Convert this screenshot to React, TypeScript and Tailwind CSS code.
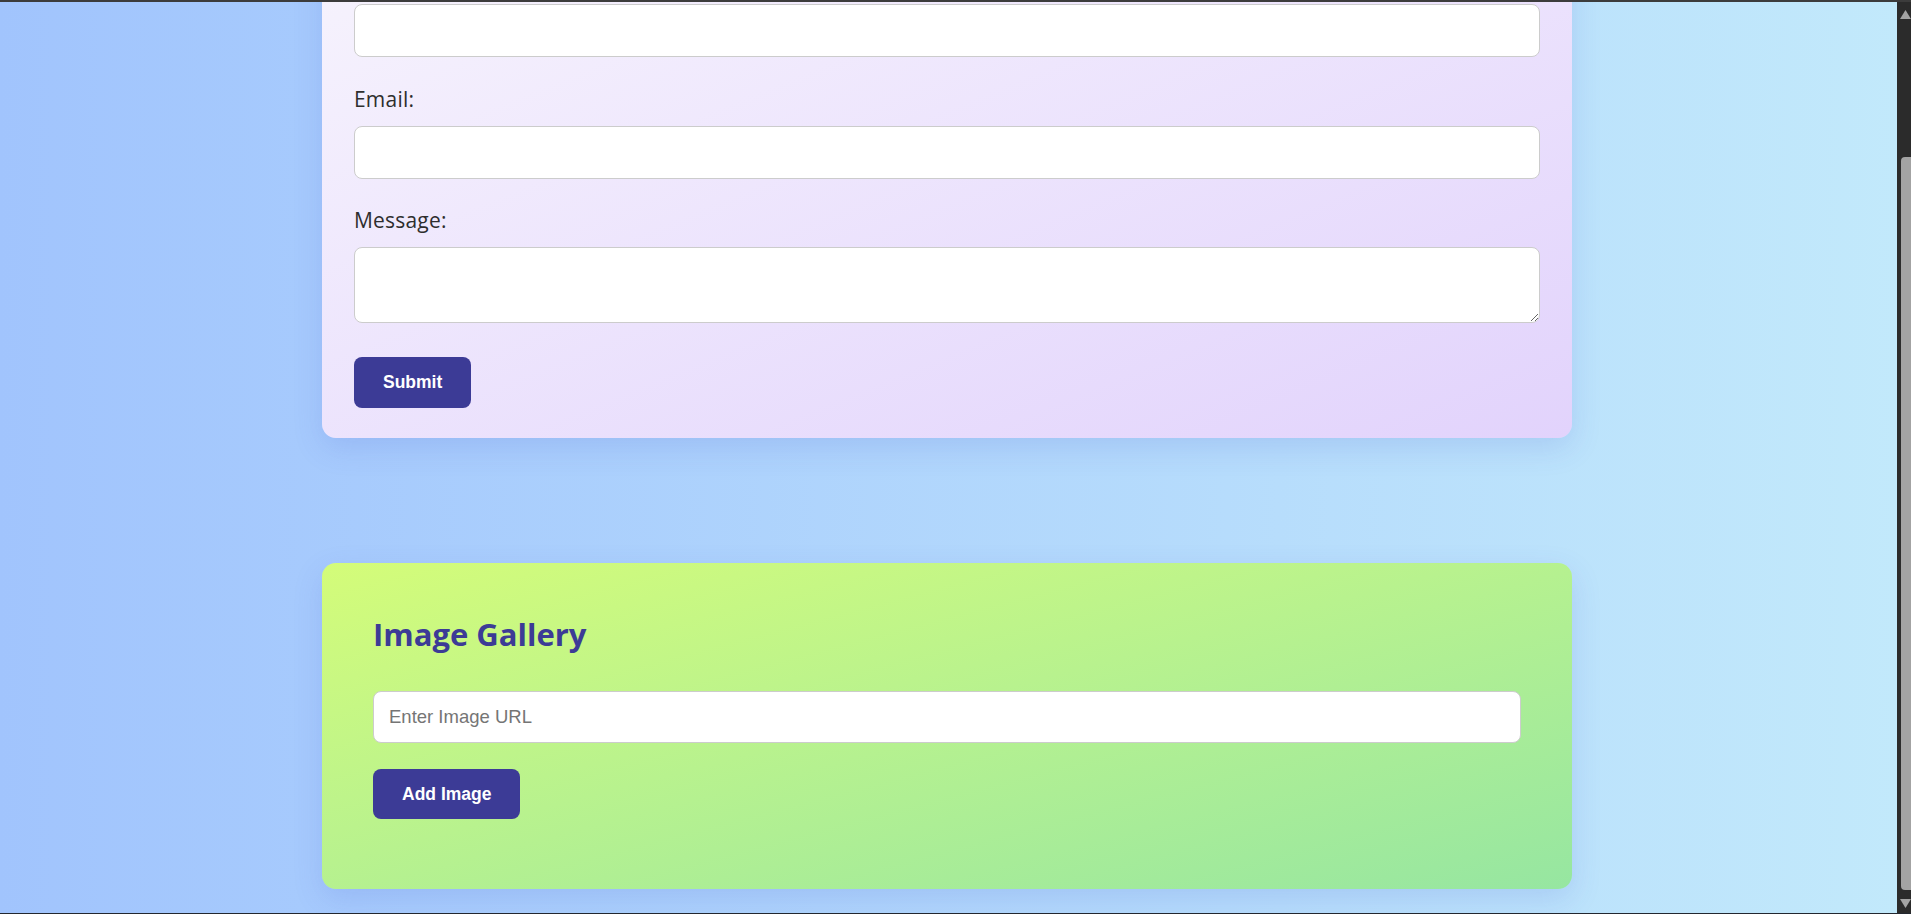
import React from "react";

const labelCls =
  "block text-[21px] leading-[30px] mb-[12px] tracking-[0.2px] text-[#2e2e2e] font-['Open_Sans',sans-serif]";
const inputCls =
  "block w-full bg-white border border-[#cccccc] rounded-[8px] px-[15px] text-[18.5px] text-[#333] placeholder:text-[#757575] font-['Liberation_Sans',Arial,sans-serif] outline-none";
const btnCls =
  "block bg-[#3c3b96] text-white font-bold text-[17.5px] px-[29px] rounded-[8px] font-['Liberation_Sans',Arial,sans-serif]";

const Field = ({ label, first, area }: { label: string; first?: boolean; area?: boolean }) => (
  <div className={first ? "" : "mt-[26.5px]"}>
    <label className={labelCls}>{label}</label>
    {area ? (
      <textarea className={inputCls + " h-[76px] py-2 resize-y"} />
    ) : (
      <input type="text" className={inputCls + " h-[53px]"} />
    )}
  </div>
);

const Scrollbar = () => (
  <div className="w-[14px] h-full bg-[#2b2b2b] flex flex-col items-end overflow-hidden">
    {/* up arrow */}
    <svg width="14" height="15" viewBox="0 0 14 15" className="mt-[4px] shrink-0">
      <polygon points="3,13 8.5,4 14,13" fill="#a3a3a3" />
    </svg>
    {/* thumb */}
    <div className="mt-[136px] w-[10px] h-[733px] bg-[#a3a3a3] rounded-l-[4px] shrink-0" />
    {/* down arrow */}
    <svg width="14" height="12" viewBox="0 0 14 12" className="mt-[8px] shrink-0">
      <polygon points="3,1 14,1 8.5,10" fill="#a3a3a3" />
    </svg>
  </div>
);

export default function App() {
  return (
    <div className="h-[914px] w-full overflow-hidden flex flex-col bg-[#23272f]">
      <div className="h-[2px] bg-[#3c3c3c] shrink-0" />
      <div className="flex flex-1 min-h-0">
        <main className="flex-1 overflow-hidden bg-gradient-to-r from-[#a1c4fd] to-[#c2e9fb] pr-[3px]">
          {/* Contact form card */}
          <section className="mx-auto w-[1250px] -mt-[72px] rounded-[14px] px-[32px] pt-[32px] pb-[30px] bg-gradient-to-br from-[#f7f4fd] to-[#e2d3fc] shadow-[0_10px_30px_rgba(60,80,200,0.15)]">
            <form onSubmit={(e) => e.preventDefault()}>
              <Field label="Name:" first />
              <Field label="Email:" />
              <Field label="Message:" area />
              <button type="submit" className={btnCls + " h-[51px] mt-[34px]"}>
                Submit
              </button>
            </form>
          </section>

          {/* Image gallery card */}
          <section className="mx-auto w-[1250px] mt-[125px] rounded-[14px] px-[51px] pt-[53px] pb-[70px] bg-gradient-to-br from-[#d4fc79] to-[#96e6a1] shadow-[0_10px_30px_rgba(60,80,200,0.15)]">
            <h2 className="text-[31px] leading-[37px] font-bold text-[#3c3b96] font-['Open_Sans',sans-serif] mb-[38px]">
              Image Gallery
            </h2>
            <input type="text" placeholder="Enter Image URL" className={inputCls + " h-[52px]"} />
            <button type="button" className={btnCls + " h-[50px] mt-[26px]"}>
              Add Image
            </button>
          </section>
        </main>
        <Scrollbar />
      </div>
      <div className="h-[1px] bg-[#23272f] shrink-0" />
    </div>
  );
}
